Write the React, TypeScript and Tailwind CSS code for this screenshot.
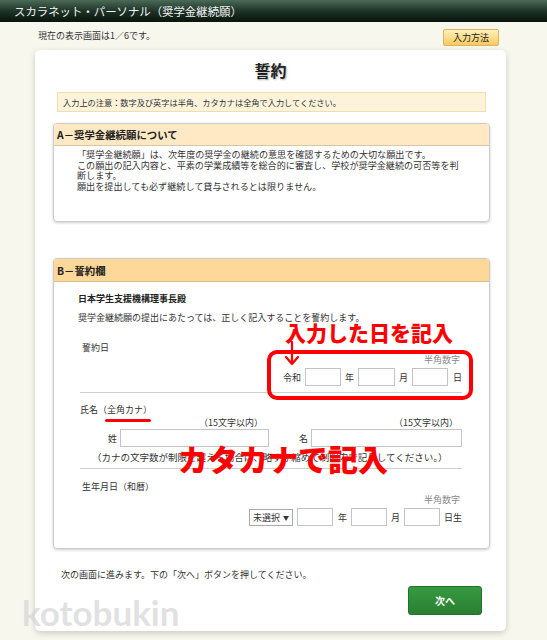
import React from "react";

const jp = { fontFamily: '"Noto Sans CJK JP", "Noto Sans", sans-serif' };

function Box({ w }: { w: string }) {
  return <div className={`${w} h-[18px] border border-[#c4c4c4] bg-white`} />;
}

export default function App() {
  return (
    <div style={jp} className="relative w-[547px] h-[640px] overflow-hidden bg-[#f8f7ee] text-[#333]">
      {/* top bar */}
      <div className="h-[22px] bg-gradient-to-b from-[#4b6b58] via-[#1f3428] to-[#08140d] pl-[14px] text-[11.4px] leading-[22px] text-[#f2f2f2]">
        スカラネット・パーソナル（奨学金継続願）
      </div>
      <div className="h-[28px] flex items-center justify-between pl-[38px] pr-[48px]">
        <span className="text-[9px]">現在の表示画面は1／6です。</span>
        <button className="h-[17px] px-[9px] mt-[2px] text-[9px] leading-[15px] rounded-[2px] border border-[#d8b463] bg-gradient-to-b from-[#fff0b8] to-[#f7c95c] text-[#222]">
          入力方法
        </button>
      </div>

      {/* card */}
      <div className="ml-[35px] w-[471px] h-[581px] bg-white rounded-[5px] shadow-[0_2px_6px_rgba(0,0,0,0.18)] flex flex-col">
        <div className="pt-[9px] text-center text-[16px] leading-[22px] font-bold text-[#222] [text-shadow:1px_1px_2px_rgba(0,0,0,0.3)]">誓約</div>

        <div className="mt-[11px] ml-[22px] mr-[20px] h-[20px] border border-[#f0deae] bg-[#fdf3da] pl-[5px] text-[8.2px] leading-[18px]">
          入力上の注意：数字及び英字は半角、カタカナは全角で入力してください。
        </div>

        {/* Section A */}
        <div className="mt-[11px] ml-[18px] mr-[16px] border border-[#cbcbcb] rounded-[4px] shadow-[0_1px_3px_rgba(0,0,0,0.2)] overflow-hidden">
          <div className="h-[22px] bg-[#fee9c4] border-b border-[#d9c7a4] pl-[3px] text-[10.4px] leading-[22px] font-bold text-[#222]">
            A－奨学金継続願について
          </div>
          <div className="pl-[23px] pt-[3px] pb-[30px] text-[9.1px] leading-[10.6px] whitespace-nowrap">
            <div>「奨学金継続願」は、次年度の奨学金の継続の意思を確認するための大切な願出です。</div>
            <div>この願出の記入内容と、平素の学業成績等を総合的に審査し、学校が奨学金継続の可否等を判</div>
            <div>断します。</div>
            <div>願出を提出しても必ず継続して貸与されるとは限りません。</div>
          </div>
        </div>

        {/* Section B */}
        <div className="mt-[36px] ml-[18px] mr-[16px] border border-[#cbcbcb] rounded-[4px] shadow-[0_1px_3px_rgba(0,0,0,0.2)] overflow-hidden">
          <div className="h-[23px] bg-[#fed898] border-b border-[#d9bb86] pl-[3px] text-[10.4px] leading-[23px] font-bold text-[#222]">
            B－誓約欄
          </div>
          <div className="pl-[26px] pr-[27px] pb-[22px] text-[9px]">
            <div className="mt-[10px] -ml-[2px] leading-[14px] font-bold text-[#222]">日本学生支援機構理事長殿</div>
            <div className="mt-[5px] -ml-[2px] leading-[14px]">奨学金継続願の提出にあたっては、正しく記入することを誓約します。</div>
            <div className="mt-[17px] ml-[2px] leading-[12px]">誓約日</div>
            <div className="pr-[2px] text-right leading-[12px] text-[#888]">半角数字</div>
            <div className="mt-[2px] flex items-center justify-end gap-[4px]">
              <span>令和</span>
              <Box w="w-[36px]" />
              <span>年</span>
              <Box w="w-[37px]" />
              <span>月</span>
              <Box w="w-[36px]" />
              <span className="ml-[1px]">日</span>
            </div>
            <div className="mt-[6px] h-px bg-[#cfcfcf]" />

            <div className="mt-[11px] leading-[12px]">氏名（全角カナ）</div>
            <div className="mt-[1px] flex">
              <div className="w-[189px] flex flex-col items-end">
                <div className="pr-[6px] leading-[12px]">（15文字以内）</div>
                <div className="flex items-center gap-[3px]">
                  <span>姓</span>
                  <Box w="w-[149px]" />
                </div>
              </div>
              <div className="ml-[21px] w-[172px] flex flex-col items-end">
                <div className="pr-[4px] leading-[12px]">（15文字以内）</div>
                <div className="flex items-center gap-[3px]">
                  <span>名</span>
                  <Box w="w-[151px]" />
                </div>
              </div>
            </div>
            <div className="mt-[4px] ml-[12px] text-[9.5px] leading-[12px] whitespace-nowrap">
              （カナの文字数が制限を超える場合は、略すか縮めて制限内で記入してください。）
            </div>
            <div className="mt-[5px] h-px bg-[#cfcfcf]" />

            <div className="mt-[12px] ml-[2px] leading-[12px]">生年月日（和暦）</div>
            <div className="mt-[1px] pr-[2px] text-right leading-[12px] text-[#888]">半角数字</div>
            <div className="mt-[2px] flex items-center justify-end gap-[4px]">
              <div className="w-[44px] h-[17px] border border-[#aaa] bg-white flex items-center justify-between px-[3px] leading-[15px]">
                <span>未選択</span>
                <span className="text-[6px]">▼</span>
              </div>
              <Box w="w-[36px]" />
              <span className="ml-[1px]">年</span>
              <Box w="w-[36px]" />
              <span>月</span>
              <Box w="w-[36px]" />
              <span>日生</span>
            </div>
          </div>
        </div>

        <div className="mt-[20px] ml-[26px] text-[9px] leading-[12px]">
          次の画面に進みます。下の「次へ」ボタンを押してください。
        </div>
        <button className="mt-[5px] mr-[24px] self-end w-[74px] h-[29px] rounded-[3px] border border-[#22702a] bg-gradient-to-b from-[#369a40] to-[#2a7f32] text-white text-[10px] font-bold">
          次へ
        </button>
      </div>

      {/* annotations */}
      <div className="absolute left-[267px] top-[350px] w-[206px] h-[50px] border-[4px] border-[#ff0000] rounded-[10px]" />
      <div className="absolute left-[285px] top-[322px] text-[21px] leading-[21px] font-black text-[#ff0000]">入力した日を記入</div>
      <svg className="absolute left-[283px] top-[341px]" width="18" height="26" viewBox="0 0 18 26">
        <path d="M9 1 V23 M3 16 L9 23 L15 16" fill="none" stroke="#ff0000" strokeWidth="2.2" strokeLinecap="round" strokeLinejoin="round" />
      </svg>
      <div className="absolute left-[105px] top-[419px] w-[46px] h-[3px] rounded-full bg-[#ff0000]" />
      <div className="absolute left-[178px] top-[443px] text-[30px] leading-[30px] font-black text-[#ff0000]">カタカナで記入</div>
      <div className="absolute left-[22px] top-[592px] text-[35px] leading-[40px] font-bold text-[#d4d4d4]/70" style={{ fontFamily: "Lato, sans-serif" }}>
        kotobukin
      </div>
    </div>
  );
}
